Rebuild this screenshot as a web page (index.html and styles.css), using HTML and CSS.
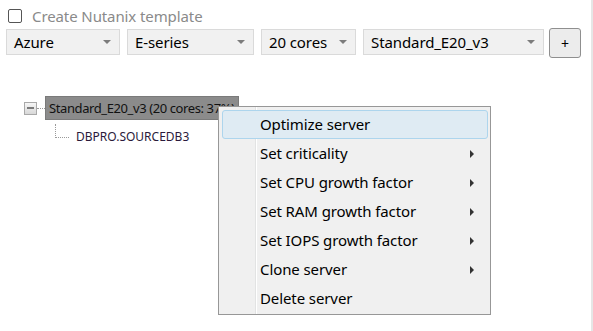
FILE: index.html
```html
<!DOCTYPE html>
<html>
<head>
<meta charset="utf-8">
<link rel="stylesheet" href="styles.css">
</head>
<body>
<div class="page">
  <label class="check-row">
    <span class="checkbox"></span>
    <span class="check-label">Create Nutanix template</span>
  </label>
  <div class="combo-row">
    <div class="combo w-provider"><span>Azure</span><i class="arrow"></i></div>
    <div class="combo w-series"><span>E-series</span><i class="arrow"></i></div>
    <div class="combo w-cores"><span>20 cores</span><i class="arrow"></i></div>
    <div class="combo w-size"><span>Standard_E20_v3</span><i class="arrow"></i></div>
    <button class="plus">+</button>
  </div>
  <div class="tree">
    <div class="node-row">
      <span class="expander"><span class="minus"></span></span>
      <span class="hdots"></span>
      <span class="node-sel">Standard_E20_v3 (20 cores: 37%)</span>
    </div>
    <div class="child-row">
      <span class="elbow"></span>
      <span class="child-text">DBPRO.SOURCEDB3</span>
    </div>
  </div>

  <div class="menu">
    <div class="gutter"></div>
    <div class="item hl">Optimize server</div>
    <div class="item sub">Set criticality</div>
    <div class="item sub">Set CPU growth factor</div>
    <div class="item sub">Set RAM growth factor</div>
    <div class="item sub">Set IOPS growth factor</div>
    <div class="item sub">Clone server</div>
    <div class="item">Delete server</div>
  </div>
</div>
</body>
</html>
```
FILE: styles.css
```css
html, body {
  margin: 0;
  padding: 0;
  background: #fff;
}
body {
  font-family: "Noto Sans", "Open Sans", sans-serif;
  color: #000;
}
.page {
  position: relative;
  width: 591px;
  height: 331px;
  border-right: 2px solid #e6e6e6;
}
.check-row {
  display: flex;
  align-items: center;
  gap: 10px;
  padding: 6px 0 0 8px;
  height: 20px;
}
.checkbox {
  width: 12px;
  height: 12px;
  border: 1px solid #555;
  border-radius: 2px;
  background: #fff;
}
.check-label {
  font-size: 15px;
  color: #8a8a8a;
  letter-spacing: -0.1px;
}
.combo-row {
  display: flex;
  align-items: flex-start;
  padding: 3px 0 0 6px;
  height: 26px;
}
.combo {
  display: flex;
  align-items: center;
  justify-content: space-between;
  height: 26px;
  border: 1px solid #dadada;
  background: #f1f1f1;
  box-sizing: border-box;
  padding: 0 8px 0 7px;
  font-size: 15px;
  margin-right: 7px;
}
.combo span { letter-spacing: -0.1px; }
.w-provider { width: 114px; margin-right: 7px; }
.w-series { width: 127px; }
.w-cores { width: 95px; }
.w-size { width: 181px; margin-right: 5px; }
.arrow {
  width: 0;
  height: 0;
  border-left: 4px solid transparent;
  border-right: 4px solid transparent;
  border-top: 4px solid #7c7c7c;
}
.plus {
  width: 32px;
  height: 30px;
  border: 1px solid #8f8f8f;
  border-radius: 3px;
  background: #ececec;
  font-family: "Noto Sans", sans-serif;
  font-size: 14px;
  padding: 0;
  margin-top: -1px;
  color: #000;
}
.tree {
  padding: 41px 0 0 24px;
}
.node-row {
  display: flex;
  align-items: center;
  height: 24px;
}
.expander {
  width: 11px;
  height: 11px;
  border: 1px solid #a9a9a9;
  background: linear-gradient(#f6f6f6, #d8d8d8);
  display: flex;
  align-items: center;
  justify-content: center;
}
.minus {
  width: 7px;
  height: 2px;
  background: #7a7a7a;
}
.hdots {
  width: 8px;
  border-top: 1px dotted #9a9a9a;
}
.node-sel {
  height: 24px;
  line-height: 23px;
  background: #8b8b8b;
  border: 1px solid #7a7a7a;
  box-sizing: border-box;
  padding: 0 3px 0 3px;
  font-size: 13px;
  color: #111;
  white-space: nowrap;
  letter-spacing: -0.4px;
}
.child-row {
  display: flex;
  align-items: flex-start;
  padding-left: 31px;
}
.elbow {
  width: 13px;
  height: 13px;
  margin-top: 4px;
  border-left: 1px dotted #9a9a9a;
  border-bottom: 1px dotted #9a9a9a;
}
.child-text {
  font-size: 12px;
  color: #2a1a3a;
  margin: 8px 0 0 7px;
  line-height: 18px;
}
.menu {
  position: absolute;
  left: 218px;
  top: 106px;
  width: 273px;
  height: 209px;
  border: 1px solid #979797;
  background: #f0f0f0;
  padding: 3px 2px 3px 3px;
  box-sizing: border-box;
}
.gutter {
  position: absolute;
  left: 36px;
  top: 0;
  bottom: 0;
  width: 1px;
  background: #e2e3e3;
  border-right: 1px solid #fff;
}
.item {
  position: relative;
  height: 29px;
  line-height: 27px;
  border: 1px solid transparent;
  border-radius: 3px;
  box-sizing: border-box;
  padding-left: 37px;
  font-size: 15px;
  letter-spacing: -0.1px;
}
.item.hl {
  background: #dfebf3;
  border-color: #add5ed;
}
.item.sub::after {
  content: "";
  position: absolute;
  right: 13px;
  top: 10px;
  width: 0;
  height: 0;
  border-top: 4px solid transparent;
  border-bottom: 4px solid transparent;
  border-left: 4px solid #333;
}
```
